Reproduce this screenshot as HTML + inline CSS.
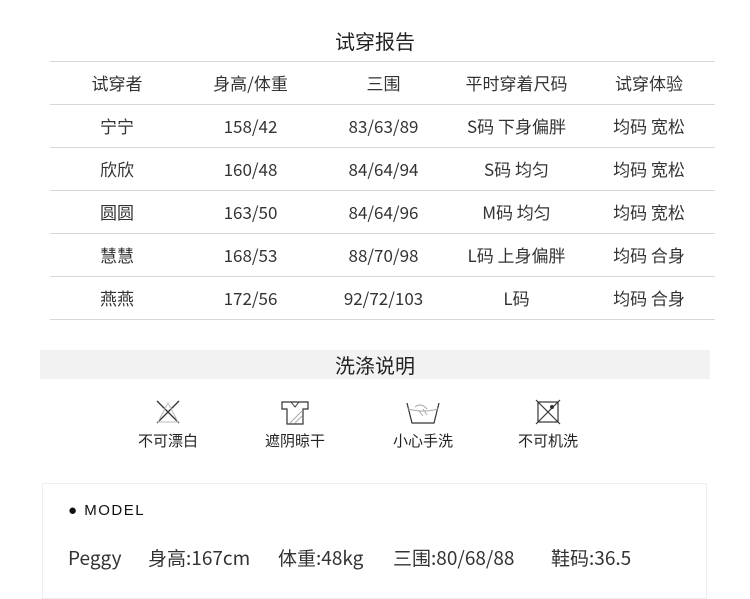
<!DOCTYPE html>
<html><head><meta charset="utf-8"><style>
body{margin:0;width:750px;height:597px;background:#fff;font-family:"Noto Sans CJK SC","Liberation Sans",sans-serif;color:#222;position:relative;overflow:hidden}
.t{position:absolute;left:0;width:750px;text-align:center;font-size:20px;top:27px;line-height:28px}
table{position:absolute;left:50px;top:61px;width:665px;border-collapse:collapse;font-size:17px;color:#333}
td{height:42px;border-bottom:1px solid #d8d8d8;text-align:center;padding:0;line-height:20px}
tr:first-child td{border-top:1px solid #d8d8d8}
.bar{position:absolute;left:40px;top:350px;width:670px;height:29px;background:#f2f2f2;text-align:center;font-size:20px;line-height:29px}
.ic{position:absolute;top:399px;width:120px;text-align:center;font-size:15px;line-height:20px}
.ic svg{display:block;margin:0 auto 6px}
.box{position:absolute;left:42px;top:483px;width:665px;height:116px;border:1px solid #eee;box-sizing:border-box}
.m{position:absolute;left:25px;top:18px;font-size:15px;letter-spacing:1.5px;color:#111;font-family:"Liberation Sans",sans-serif}
.p span{position:absolute;top:61px;font-size:19px;color:#333;white-space:nowrap;line-height:26px}
</style></head><body>
<div class="t">试穿报告</div>
<table>
<tr><td style="width:134px">试穿者</td><td style="width:133px">身高/体重</td><td style="width:133px">三围</td><td style="width:133px">平时穿着尺码</td><td>试穿体验</td></tr>
<tr><td>宁宁</td><td>158/42</td><td>83/63/89</td><td>S码 下身偏胖</td><td>均码 宽松</td></tr>
<tr><td>欣欣</td><td>160/48</td><td>84/64/94</td><td>S码 均匀</td><td>均码 宽松</td></tr>
<tr><td>圆圆</td><td>163/50</td><td>84/64/96</td><td>M码 均匀</td><td>均码 宽松</td></tr>
<tr><td>慧慧</td><td>168/53</td><td>88/70/98</td><td>L码 上身偏胖</td><td>均码 合身</td></tr>
<tr><td>燕燕</td><td>172/56</td><td>92/72/103</td><td>L码</td><td>均码 合身</td></tr>
</table>
<div class="bar">洗涤说明</div>
<div class="ic" style="left:108px"><svg width="26" height="26" viewBox="0 0 26 26"><path d="M2 2L24 24M24 2L2 24" stroke="#333" stroke-width="1.3" fill="none"/><path d="M13 4L3 23H23Z" stroke="#bbb" fill="none"/></svg>不可漂白</div>
<div class="ic" style="left:235px"><svg width="30" height="26" viewBox="0 0 30 26"><path d="M2 3H28V10H23V25H7V10H2Z" stroke="#333" stroke-width="1.2" fill="none"/><path d="M11 3L15 8L19 3" stroke="#333" fill="none"/><path d="M10 24L22 12M15 24L22 17" stroke="#aaa" fill="none"/></svg>遮阴晾干</div>
<div class="ic" style="left:363px"><svg width="36" height="26" viewBox="0 0 36 26"><path d="M2 4L7 24H29L34 4" stroke="#333" stroke-width="1.2" fill="none"/><path d="M3 10Q18 14 33 10M10 8Q16 3 22 10M14 12L18 17M18 10L22 16" stroke="#aaa" fill="none"/></svg>小心手洗</div>
<div class="ic" style="left:488px"><svg width="26" height="26" viewBox="0 0 26 26"><rect x="3" y="3" width="20" height="20" stroke="#333" stroke-width="1.2" fill="none"/><path d="M1 1L25 25M25 1L1 25" stroke="#333" stroke-width="1.2"/><circle cx="17" cy="8" r="2" fill="#333"/></svg>不可机洗</div>
<div class="box"><div class="m">● MODEL</div><div class="p"><span style="left:25px">Peggy</span><span style="left:105px">身高:167cm</span><span style="left:235px">体重:48kg</span><span style="left:350px">三围:80/68/88</span><span style="left:508px">鞋码:36.5</span></div></div>
</body></html>
